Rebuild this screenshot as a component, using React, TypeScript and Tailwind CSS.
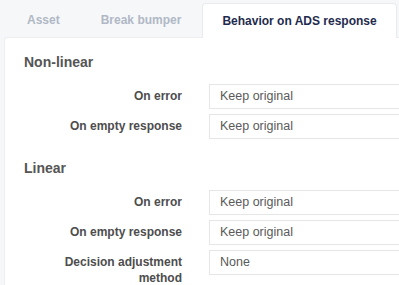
import React from 'react';

const tabs = ['Asset', 'Break bumper', 'Behavior on ADS response'];

const Field: React.FC<{ label: string; value: string }> = ({ label, value }) => (
    <div className="flex items-start">
        <div className="w-[177px] shrink-0 pl-[48px] pt-[4px] text-right text-[12px] leading-[16px] font-bold text-[#4d4d4d]">
            {label}
        </div>
        <div className="ml-[27px] h-[25px] w-[220px] shrink-0 border border-[#e6e6e6] bg-white pl-[10px] text-[12.5px] leading-[23px] text-[#5a5a5a]">
            {value}
        </div>
    </div>
);

const Section: React.FC<{ title: string; fields: [string, string][] }> = ({ title, fields }) => (
    <div>
        <h2 className="pl-[19px] text-[14px] leading-[17px] font-bold text-[#555]">{title}</h2>
        <div className="mt-[13px] flex flex-col gap-[5px]">
            {fields.map(([l, v]) => (
                <Field key={l} label={l} value={v} />
            ))}
        </div>
    </div>
);

export default function App() {
    return (
        <div className="w-[399px] h-[285px] overflow-hidden bg-[#f6f7f9] font-['Liberation_Sans',Arial,sans-serif]">
            <div className="flex h-[37px] items-end pl-[4px] pt-[3px]">
                {tabs.map((t, i) =>
                    i === 2 ? (
                        <div
                            key={t}
                            className="relative z-10 -mb-px flex h-[35px] shrink-0 items-center whitespace-nowrap rounded-t-[4px] border border-b-0 border-[#e9ebee] bg-white px-[19px] text-[12px] font-bold text-[#1f2b4d]"
                        >
                            {t}
                        </div>
                    ) : (
                        <div
                            key={t}
                            className={`flex h-[34px] shrink-0 items-center whitespace-nowrap text-[12px] font-bold text-[#b0b8c5] ${i === 0 ? 'pl-[23px] pr-[20px]' : 'px-[21px]'}`}
                        >
                            {t}
                        </div>
                    )
                )}
            </div>
            <div className="ml-[4px] h-[260px] rounded-tl-[3px] border-l border-t border-[#eceef1] bg-white pt-[16px]">
                <Section
                    title="Non-linear"
                    fields={[
                        ['On error', 'Keep original'],
                        ['On empty response', 'Keep original'],
                    ]}
                />
                <div className="mt-[21px]">
                    <Section
                        title="Linear"
                        fields={[
                            ['On error', 'Keep original'],
                            ['On empty response', 'Keep original'],
                            ['Decision adjustment method', 'None'],
                        ]}
                    />
                </div>
            </div>
        </div>
    );
}
